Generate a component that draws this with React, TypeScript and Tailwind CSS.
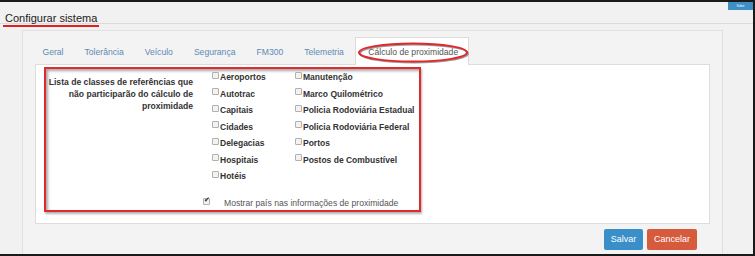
const tabs = ["Geral", "Tolerância", "Veículo", "Segurança", "FM300", "Telemetria"];

const col1 = ["Aeroportos", "Autotrac", "Capitais", "Cidades", "Delegacias", "Hospitais", "Hotéis"];
const col2 = [
  "Manutenção",
  "Marco Quilométrico",
  "Policia Rodoviária Estadual",
  "Policia Rodoviária Federal",
  "Portos",
  "Postos de Combustível",
];

function Box({ checked = false }: { checked?: boolean }) {
  return (
    <span className="relative mr-[1px] inline-block h-[7px] w-[7px] shrink-0 -translate-y-[2px] rounded-[1px] border border-[#b0b0b0] bg-[#f2f2f2]">
      {checked && (
        <span className="absolute -top-[3px] left-0 text-[7px] leading-none text-[#222]">✔</span>
      )}
    </span>
  );
}

function CheckRow({ label }: { label: string }) {
  return (
    <div className="flex h-[16.5px] items-center text-[8.5px] font-bold leading-none text-[#333]">
      <Box />
      <span>{label}</span>
    </div>
  );
}

export default function App() {
  return (
    <div
      className="relative h-[256px] w-[755px] overflow-hidden border-t-2 border-r-2 border-b-2 border-[#1a1a1a] bg-[#f1f1f1]"
      style={{ fontFamily: '"Liberation Sans", Arial, sans-serif' }}
    >
      {/* header */}
      <div className="h-[22px] border-b border-[#dcdcdc] pl-[3px] pt-[3px]">
        <span className="inline-block border-b-2 border-[#e02020] pb-[1px] pl-[2px] pr-[2px] text-[11px] leading-[12px] text-[#222]">
          Configurar sistema
        </span>
      </div>
      <div className="absolute right-0 top-0 flex h-[8px] w-[25px] items-center justify-center bg-[#3d8fc6] text-[3px] text-white">
        Sobre
      </div>

      {/* panel */}
      <div className="pl-[22px] pt-[6px]">
        <div className="h-[240px] w-[701px] border border-[#e0e0e0] bg-[#f3f3f3] px-[12px] pt-[6px]">
          {/* tabs */}
          <div className="relative z-10 -mb-px -ml-[3px] flex h-[28px] items-stretch text-[8.6px] leading-none">
            {tabs.map((t) => (
              <div key={t} className="flex items-center px-[10.5px] pt-[2px] text-[#5e89b4]">
                {t}
              </div>
            ))}
            <div className="relative ml-[1px] flex items-center border border-b-0 border-[#dddddd] bg-white pl-[12px] pr-[10px] pt-[2px] text-[#555]">
              Cálculo de proximidade
              <svg className="absolute left-[1px] top-[3px]" width="114" height="24" viewBox="0 0 114 24">
                <ellipse cx="57" cy="12.5" rx="54" ry="9" fill="none" stroke="#9a9a9a" strokeWidth="2" />
                <ellipse cx="56" cy="11.5" rx="54" ry="9" fill="none" stroke="#e3262a" strokeWidth="2" />
              </svg>
            </div>
          </div>

          {/* content */}
          <div className="h-[160px] border border-[#dddddd] bg-white pl-[8px] pt-[2px]">
            <div className="flex h-[145px] w-[377px] flex-col border-2 border-[#e12a2c] shadow-[inset_2px_2px_3px_rgba(0,0,0,0.35),1px_2px_2px_rgba(0,0,0,0.3)]">
              <div className="flex">
                <div className="w-[147px] pt-[7px] text-right text-[8.6px] font-bold leading-[12px] text-[#333]">
                  Lista de classes de referências que
                  <br />
                  não participarão do cálculo de
                  <br />
                  proximidade
                </div>
                <div className="ml-[19px] w-[83px]">
                  {col1.map((c) => (
                    <CheckRow key={c} label={c} />
                  ))}
                </div>
                <div>
                  {col2.map((c) => (
                    <CheckRow key={c} label={c} />
                  ))}
                </div>
              </div>
              <div className="mt-auto mb-[1px] flex h-[12px] items-center pl-[157px] text-[8.6px] leading-none text-[#555]">
                <Box checked />
                <span className="ml-[13px]">Mostrar país nas informações de proximidade</span>
              </div>
            </div>
          </div>

          {/* buttons */}
          <div className="mt-[5px] flex justify-end gap-[4px] pr-[13px]">
            <button className="h-[21px] w-[39px] rounded-[2px] bg-[#3a8fc9] text-[9px] text-white">Salvar</button>
            <button className="h-[21px] w-[50px] rounded-[2px] bg-[#d65b3c] text-[9px] text-white">Cancelar</button>
          </div>
        </div>
      </div>
    </div>
  );
}
